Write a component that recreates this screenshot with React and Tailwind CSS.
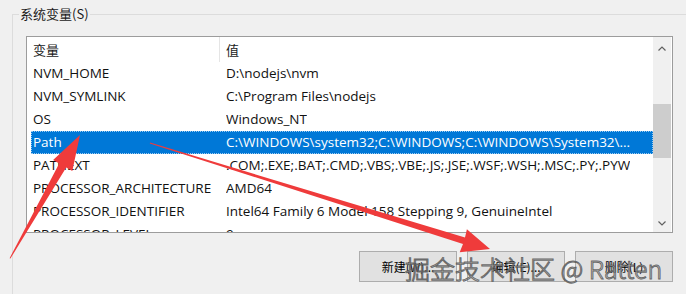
import React from "react";

const rows = [
  ["NVM_HOME", "D:\\nodejs\\nvm"],
  ["NVM_SYMLINK", "C:\\Program Files\\nodejs"],
  ["OS", "Windows_NT"],
  ["Path", "C:\\WINDOWS\\system32;C:\\WINDOWS;C:\\WINDOWS\\System32\\..."],
  ["PATHEXT", ".COM;.EXE;.BAT;.CMD;.VBS;.VBE;.JS;.JSE;.WSF;.WSH;.MSC;.PY;.PYW"],
  ["PROCESSOR_ARCHITECTURE", "AMD64"],
  ["PROCESSOR_IDENTIFIER", "Intel64 Family 6 Model 158 Stepping 9, GenuineIntel"],
  ["PROCESSOR_LEVEL", "9"],
];

function Chevron({ up }) {
  return (
    <svg width="8" height="5" viewBox="0 0 8 5">
      <path
        d={up ? "M0.5 4.5 L4 1 L7.5 4.5" : "M0.5 0.5 L4 4 L7.5 0.5"}
        fill="none"
        stroke="#606060"
        strokeWidth="1.2"
      />
    </svg>
  );
}

export default function App() {
  return (
    <div className="relative w-[686px] h-[294px] overflow-hidden bg-[#f0f0f0] text-black font-['Open_Sans','Noto_Sans_CJK_SC',sans-serif]">
      <div className="ml-[12px] mt-[14px] h-[400px] border-l border-t border-[#dcdcdc]">
        <div className="-mt-[11px] ml-[6px] w-fit bg-[#f0f0f0] px-[1px] text-[13px] leading-[20px] text-[#1a1a1a] font-['Noto_Sans_CJK_SC',sans-serif]">
          系统变量(S)
        </div>
        <div className="ml-[13px] mt-[12px] w-[647px]">
          <div className="flex h-[197px] border border-[#9c9c9c] bg-white">
            <div className="flex-1 overflow-hidden">
              <div className="flex h-[25px] items-center text-[13px] text-[#1a1a1a] font-['Noto_Sans_CJK_SC',sans-serif]">
                <div className="w-[192px] pl-[6px]">变量</div>
                <div className="h-full w-px bg-[#e5e5e5]" />
                <div className="pl-[6px]">值</div>
              </div>
              <div className="pl-[4px] text-[13.5px] leading-[23px] text-[#111]">
                {rows.map(([k, v]) => {
                  const sel = k === "Path";
                  return (
                    <div
                      key={k}
                      className={
                        sel
                          ? "flex h-[23px] whitespace-nowrap bg-[#0078d7] text-white outline-1 outline-dotted -outline-offset-1 outline-[#9ccbf0]"
                          : "flex h-[23px] whitespace-nowrap"
                      }
                    >
                      <div className="w-[195px] shrink-0 pl-[2px]">{k}</div>
                      <div className="overflow-hidden">{v}</div>
                    </div>
                  );
                })}
              </div>
            </div>
            <div className="mr-px flex w-[18px] flex-col bg-[#f0f0f0]">
              <div className="flex h-[22px] items-center justify-center">
                <Chevron up />
              </div>
              <div className="mt-[45px] h-[54px] bg-[#cdcdcd]" />
              <div className="flex-1" />
              <div className="flex h-[18px] items-center justify-center">
                <Chevron />
              </div>
            </div>
          </div>
          <div className="mt-[18px] flex justify-end gap-[10px] text-[12px] font-['Noto_Sans_CJK_SC',sans-serif]">
            <button className="h-[31px] w-[98px] border border-[#adadad] bg-[#e1e1e1]">新建(W)...</button>
            <button className="h-[31px] w-[98px] border border-[#adadad] bg-[#e1e1e1]">编辑(E)...</button>
            <button className="h-[31px] w-[98px] border border-[#adadad] bg-[#e1e1e1]">删除(L)</button>
          </div>
        </div>
      </div>

      <svg className="pointer-events-none absolute inset-0" width="686" height="294" viewBox="0 0 686 294">
        <polygon
          points="9.6,258.2 10.4,258.6 66.2,167.4 72.3,170.9 80,135 53.1,159.9 59.2,163.4"
          fill="#ef3b3b"
        />
        <polygon
          points="150,142.6 149.8,143.4 463,244 459.7,252.2 490,249 466.9,229.2 465,237.4"
          fill="#ef3b3b"
        />
      </svg>

      <div className="pointer-events-none absolute left-[405px] top-[251px] whitespace-nowrap text-[25px] leading-[34px] font-light text-[rgba(245,245,245,0.7)] [-webkit-text-stroke:1px_rgba(70,70,70,0.8)] font-['Noto_Sans_CJK_SC',sans-serif]">
        掘金技术社区 @ Ratten
      </div>
    </div>
  );
}
